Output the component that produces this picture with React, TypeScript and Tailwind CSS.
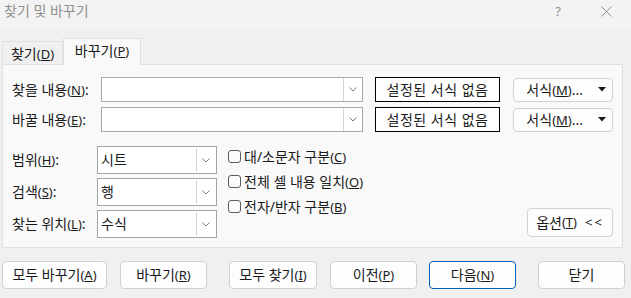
import React from "react";

const font = { fontFamily: '"Noto Sans", "Noto Sans CJK KR", sans-serif' };

const Chevron = () => (
  <svg width="8" height="5" viewBox="0 0 8 5" className="text-[#7a7a7a]">
    <polyline points="0.5,0.5 4,4 7.5,0.5" fill="none" stroke="currentColor" strokeWidth="1" />
  </svg>
);

const Caret = () => (
  <svg width="8" height="5" viewBox="0 0 8 5">
    <polygon points="0,0 8,0 4,4.5" fill="#1a1a1a" />
  </svg>
);

const Mn = ({ children }: { children: React.ReactNode }) => (
  <span className="text-[13px]">
    (<u className="underline-offset-1">{children}</u>)
  </span>
);

interface ButtonProps {
  children: React.ReactNode;
  className?: string;
  primary?: boolean;
}

const DlgButton = (props: ButtonProps) => {
  return (
    <button
      className={
        "h-[28px] rounded-[4px] bg-[#fdfdfd] text-[14px] leading-none text-[#1a1a1a] flex items-center justify-center " +
        (props.primary ? "border border-[#005fb8]" : "border border-[#d1d1d1]") +
        " " +
        (props.className || "")
      }
    >
      {props.children}
    </button>
  );
};

const Select = ({ value }: { value: string }) => (
  <div className="w-[120px] h-[28px] border border-[#a3a3a3] bg-white flex">
    <div className="flex-1 pl-[3px] flex items-center text-[14px] leading-none">{value}</div>
    <div className="w-[19px] my-[1px] mr-[1px] border-l border-[#d6d6d6] flex items-center justify-center">
      <Chevron />
    </div>
  </div>
);

const Check = ({ children }: { children: React.ReactNode }) => (
  <div className="flex items-center h-[25px]">
    <div className="w-[13px] h-[13px] rounded-[3px] border border-[#5c5c5c] bg-[#fbfbfb] mr-[3px]" />
    <span className="text-[14px] leading-none">{children}</span>
  </div>
);

const InputRow = ({ label }: { label: React.ReactNode }) => (
  <div className="flex items-center h-[25px]">
    <div className="w-[89px] text-[14px] leading-none whitespace-nowrap">{label}</div>
    <div className="w-[262px] h-[25px] border border-[#a8a8a8] bg-white flex justify-end">
      <div className="w-[19px] border-l border-[#d6d6d6] flex items-center justify-center">
        <Chevron />
      </div>
    </div>
    <div className="ml-[12px] w-[125px] h-[25px] border border-black bg-white flex items-center justify-center text-[14px] leading-none tracking-[0.5px]">
      설정된 서식 없음
    </div>
    <div className="ml-[13px] w-[100px] h-[24px] rounded-[4px] border border-[#d1d1d1] bg-[#fdfdfd] flex items-center justify-end pr-[6px] text-[14px] leading-none">
      <span className="mr-[15px]">
        서식<Mn>M</Mn>...
      </span>
      <Caret />
    </div>
  </div>
);

const App = () => {
  return (
    <div style={font} className="w-[631px] h-[298px] bg-[#f0f0f0] text-[#1a1a1a] overflow-hidden">
      {/* title bar */}
      <div className="h-[28px] bg-[#f3f3f3] flex items-center pl-[4px]">
        <span className="text-[14px] leading-none text-[#8f8f8f] -mt-[7px]">찾기 및 바꾸기</span>
        <span className="ml-auto text-[13px] leading-none text-[#8f8f8f] -mt-[6px]">?</span>
        <svg width="11" height="11" viewBox="0 0 11 11" className="ml-[40px] mr-[19px] -mt-[6px]">
          <path d="M0.5 0.5 L10.5 10.5 M10.5 0.5 L0.5 10.5" stroke="#8f8f8f" strokeWidth="1" />
        </svg>
      </div>

      {/* tabs */}
      <div className="flex items-end pl-[2px] h-[36px]">
        <div className="w-[61px] h-[23px] border border-b-0 border-[#e0e0e0] bg-[#f0f0f0] flex items-center justify-center text-[14px] leading-none pt-[2px]">
          찾기<Mn>D</Mn>
        </div>
        <div className="w-[78px] h-[27px] -mb-[1px] relative border border-b-0 border-[#e0e0e0] bg-[#f9f9f9] flex items-center justify-center text-[14px] leading-none pb-[2px]">
          바꾸기<Mn>P</Mn>
        </div>
      </div>

      {/* panel */}
      <div className="ml-[2px] w-[621px] h-[184px] border border-[#e0e0e0] bg-[#f9f9f9] pl-[9px] pt-[12px]">
        <div className="flex flex-col gap-[5px]">
          <InputRow label={<>찾을 내용<Mn>N</Mn>:</>} />
          <InputRow label={<>바꿀 내용<Mn>E</Mn>:</>} />
        </div>

        <div className="flex mt-[14px]">
          <div className="flex flex-col gap-[4px]">
            {[
              ["범위", "H", "시트"],
              ["검색", "S", "행"],
              ["찾는 위치", "L", "수식"],
            ].map((r) => (
              <div key={r[1]} className="flex items-center">
                <div className="w-[85px] text-[14px] leading-none whitespace-nowrap">
                  {r[0]}
                  <Mn>{r[1]}</Mn>:
                </div>
                <Select value={r[2]} />
              </div>
            ))}
          </div>
          <div className="ml-[11px] flex flex-col -mt-[2px]">
            <Check>
              대/소문자 구분<Mn>C</Mn>
            </Check>
            <Check>
              전체 셀 내용 일치<Mn>O</Mn>
            </Check>
            <Check>
              전자/반자 구분<Mn>B</Mn>
            </Check>
          </div>
          <div className="ml-auto mr-[9px] self-end mb-[1px]">
            <DlgButton className="w-[86px] h-[29px]">
              옵션<Mn>T</Mn>
              <span className="ml-[8px] text-[13px] tracking-[2px]">&lt;&lt;</span>
            </DlgButton>
          </div>
        </div>
      </div>

      {/* bottom buttons */}
      <div className="flex mt-[13px] pl-[2px]">
        <DlgButton className="w-[105px]">
          모두 바꾸기<Mn>A</Mn>
        </DlgButton>
        <DlgButton className="w-[87px] ml-[13px]">
          바꾸기<Mn>R</Mn>
        </DlgButton>
        <DlgButton className="w-[88px] ml-[22px]">
          모두 찾기<Mn>I</Mn>
        </DlgButton>
        <DlgButton className="w-[87px] ml-[13px]">
          이전<Mn>P</Mn>
        </DlgButton>
        <DlgButton className="w-[87px] ml-[12px]" primary>
          다음<Mn>N</Mn>
        </DlgButton>
        <DlgButton className="w-[87px] ml-[22px]">닫기</DlgButton>
      </div>
    </div>
  );
};

export default App;
